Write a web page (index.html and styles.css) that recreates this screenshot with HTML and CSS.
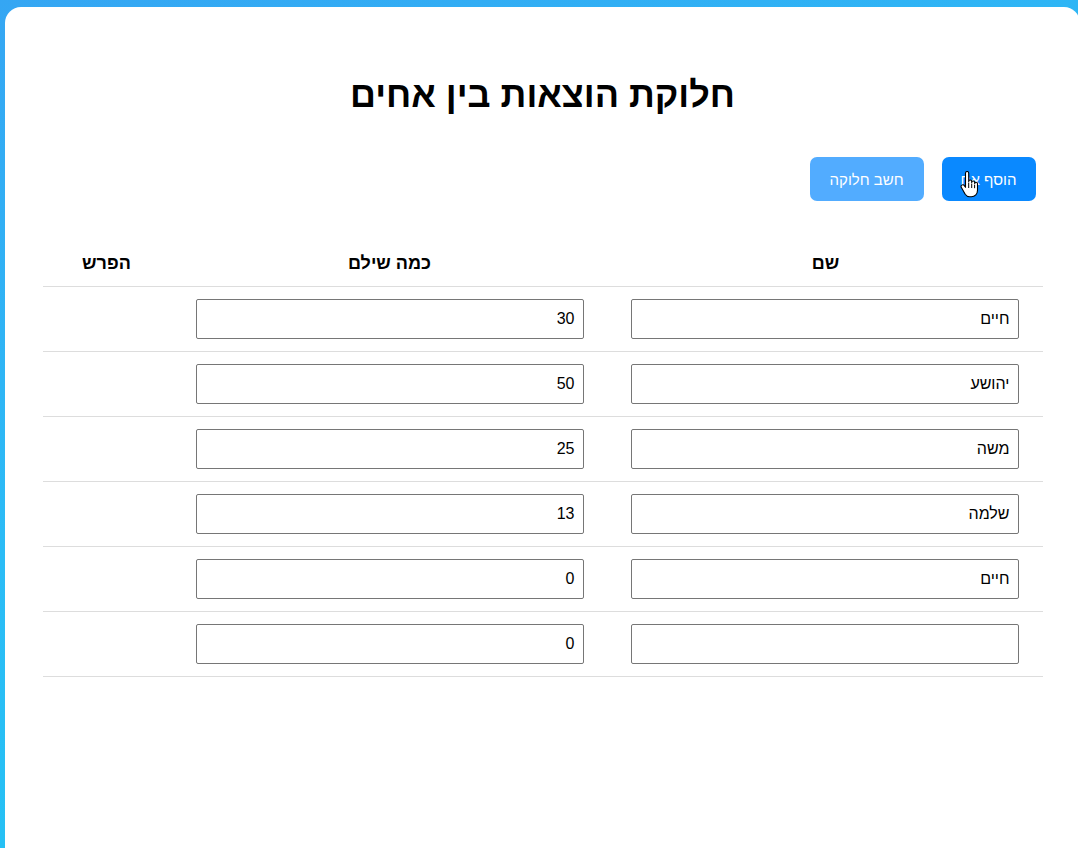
FILE: index.html
```html
<!DOCTYPE html>
<html lang="he" dir="rtl">
<head>
    <meta charset="UTF-8">
    <meta name="viewport" content="width=device-width, initial-scale=1.0">
    <title>חלוקת הוצאות בין אחים</title>
    <link rel="stylesheet" href="styles.css">
</head>
<body>
    <div class="card">
        <h1>חלוקת הוצאות בין אחים</h1>

        <div class="button-area">
            <button class="btn" onclick="addBrother()">הוסף אח</button>
            <button class="btn btn-light" onclick="calculate()">חשב חלוקה</button>
            <svg class="cursor" width="20" height="30" viewBox="0 0 20 30">
                <path d="M5.5 2.2c0-1 .7-1.7 1.6-1.7s1.6.7 1.6 1.7v8.3c0-.9.7-1.5 1.5-1.5s1.5.6 1.5 1.5v1c0-.9.7-1.5 1.5-1.5s1.5.6 1.5 1.5v1.2c0-.8.6-1.4 1.4-1.4s1.4.6 1.4 1.4v6.5c0 3.6-2.4 6.6-6.2 6.6H9.6c-2 0-3.3-.9-4.4-2.5L1.4 16.6c-.6-.9-.4-2 .4-2.5.8-.6 1.9-.3 2.5.5l1.2 1.7z" fill="#fff" stroke="#000" stroke-width="1.1" stroke-linejoin="round"/>
                <path d="M8.7 11.5v5.5M11.7 12.5v4.5M14.6 13.8v3.4" stroke="#000" stroke-width="1" fill="none"/>
            </svg>
        </div>

        <table class="split-table">
            <thead>
                <tr>
                    <th class="col-name">שם</th>
                    <th class="col-paid">כמה שילם</th>
                    <th class="col-diff">הפרש</th>
                </tr>
            </thead>
            <tbody id="rows">
            </tbody>
        </table>
    </div>

    <script>
        const brothers = [
            { name: 'חיים', paid: 30 },
            { name: 'יהושע', paid: 50 },
            { name: 'משה', paid: 25 },
            { name: 'שלמה', paid: 13 },
            { name: 'חיים', paid: 0 },
            { name: '', paid: 0 }
        ];

        function render() {
            const tbody = document.getElementById('rows');
            tbody.innerHTML = '';
            brothers.forEach(b => {
                const tr = document.createElement('tr');
                tr.innerHTML = `
                    <td class="col-name"><input type="text" value="${b.name}"></td>
                    <td class="col-paid"><input type="number" value="${b.paid}"></td>
                    <td class="col-diff"></td>
                `;
                tbody.appendChild(tr);
            });
        }

        function addBrother() {
            brothers.push({ name: '', paid: 0 });
            render();
        }

        function calculate() {
            // עדיין לא מומש
        }

        render();
    </script>
</body>
</html>
```

FILE: styles.css
```css
* {
    margin: 0;
    padding: 0;
    box-sizing: border-box;
}

html, body {
    height: 100%;
}

body {
    font-family: 'Liberation Sans', Arial, sans-serif;
    background: linear-gradient(160deg, #35a6f3 0%, #2bbcf6 45%, #1fc6f2 100%);
    color: #000;
    padding: 7px 0 0 0;
    overflow: hidden;
}

.card {
    width: 1075px;
    margin: 0 -2px 0 5px;
    height: 100%;
    background: white;
    border-radius: 16px 16px 0 0;
    padding-top: 68px;
    position: relative;
}

h1 {
    text-align: center;
    font-size: 36px;
    font-weight: bold;
    line-height: 40px;
}

.button-area {
    width: 1000px;
    margin: 42px auto 0;
    padding-right: 7px;
    display: flex;
    gap: 18px;
    position: relative;
}

.btn {
    height: 44px;
    padding: 0 19px;
    border: none;
    border-radius: 7px;
    background: #0a89ff;
    color: white;
    font-family: inherit;
    font-size: 15px;
    cursor: pointer;
}

.btn-light {
    padding: 0 20px;
    opacity: 0.7;
}

.cursor {
    position: absolute;
    right: 63px;
    top: 14px;
}

.split-table {
    width: 1000px;
    margin: 40px auto 0;
    border-collapse: collapse;
}

th {
    font-size: 18px;
    font-weight: bold;
    line-height: 21px;
    padding: 12px 0;
    text-align: center;
    border-bottom: 1px solid #ddd;
}

td {
    padding: 12px 24px 12px 22px;
    border-bottom: 1px solid #ddd;
}

.col-name {
    width: 434px;
}

.col-paid {
    width: 438px;
}

td.col-paid {
    padding: 12px 25px;
}

.col-diff {
    width: 128px;
}

input {
    width: 100%;
    height: 40px;
    padding: 0 8px;
    border: 1px solid #767676;
    border-radius: 2px;
    font-family: inherit;
    font-size: 16px;
    text-align: right;
    direction: rtl;
    background: white;
}

input[type=number]::-webkit-inner-spin-button,
input[type=number]::-webkit-outer-spin-button {
    -webkit-appearance: none;
    margin: 0;
}
```
